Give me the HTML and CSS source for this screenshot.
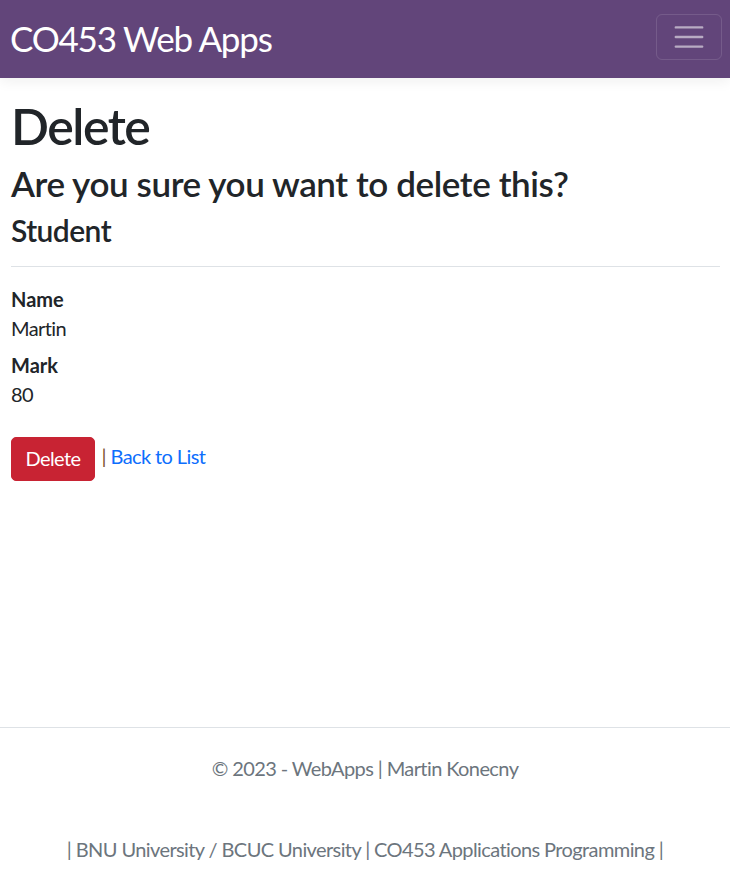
FILE: index.html
```html
<!DOCTYPE html>
<html lang="en">
<head>
<meta charset="utf-8">
<title>Delete - CO453 Web Apps</title>
<link rel="stylesheet" href="styles.css">
</head>
<body>
<header class="navbar">
  <a class="brand" href="#">CO453 Web Apps</a>
  <button class="toggler" type="button" aria-label="Toggle navigation">
    <svg class="toggler-icon" viewBox="0 0 30 30" width="36" height="36"><path d="M4 7h22M4 15h22M4 23h22" stroke="rgba(255,255,255,0.55)" stroke-width="2" stroke-linecap="round" fill="none"/></svg>
  </button>
</header>
<main class="container">
  <h1 class="title">Delete</h1>
  <h3 class="subtitle">Are you sure you want to delete this?</h3>
  <div class="details">
    <h4 class="entity">Student</h4>
    <hr class="rule">
    <dl class="fields">
      <dt class="label">Name</dt>
      <dd class="value">Martin</dd>
      <dt class="label">Mark</dt>
      <dd class="value">80</dd>
    </dl>
    <form class="actions">
      <input type="submit" value="Delete" class="btn-danger">
      <span class="after"><span class="sep">|</span> <a class="link" href="#">Back to List</a></span>
    </form>
  </div>
</main>
<footer class="footer">
  <div class="footer-line1">© 2023 - WebApps | Martin Konecny</div>
  <div class="footer-line2">| BNU University / BCUC University | CO453 Applications Programming |</div>
</footer>
</body>
</html>
```

FILE: styles.css
```css
* { box-sizing: border-box; }
html, body { margin: 0; padding: 0; }
body {
  font-family: Lato, "Open Sans", sans-serif;
  font-size: 20px;
  line-height: 1.5;
  letter-spacing: -0.6px;
  color: #212529;
  background: #fff;
  min-height: 100vh;
  display: flex;
  flex-direction: column;
}
.navbar {
  height: 78px;
  background: #62457a;
  display: flex;
  justify-content: space-between;
  align-items: flex-start;
  padding: 14px 8px 0 10px;
  box-shadow: 0 4px 12px rgba(0,0,0,0.06);
  position: relative;
  z-index: 1;
}
.brand {
  color: #fff;
  text-decoration: none;
  font-size: 35px;
  line-height: 47px;
  letter-spacing: -1.2px;
  margin-top: 1px;
}
.toggler {
  width: 66px;
  height: 46px;
  padding: 4px 14px;
  border: 1px solid rgba(255,255,255,0.12);
  border-radius: 6px;
  background: transparent;
  display: flex;
  align-items: center;
  justify-content: center;
}
.toggler-icon { display: block; }
.container {
  flex: 1;
  padding: 18px 10px 0 11px;
}
.title {
  font-size: 50px;
  line-height: 60px;
  font-weight: 600;
  letter-spacing: -1.5px;
  margin: 0 0 6px;
}
.subtitle {
  font-size: 35px;
  line-height: 42px;
  font-weight: 600;
  letter-spacing: -0.4px;
  margin: 0 0 8px;
}
.entity {
  font-size: 30px;
  line-height: 36px;
  font-weight: 600;
  letter-spacing: -0.55px;
  margin: 0;
}
.rule {
  border: 0;
  border-top: 1px solid #dee2e6;
  margin: 18px 0 18px;
  height: 0;
}
.fields { margin: 0; }
.label {
  font-weight: 700;
  line-height: 29px;
  letter-spacing: 0;
  margin: 0;
}
.value {
  line-height: 29px;
  margin: 0 0 8px;
}
.actions {
  margin-top: 28px;
  display: flex;
  align-items: flex-start;
}
.btn-danger {
  width: 84px;
  height: 44px;
  padding: 5px 0 7px;
  border: 1px solid #c82333;
  border-radius: 5px;
  background: #c82333;
  color: #fff;
  font-family: inherit;
  font-size: 20px;
  line-height: 30px;
  letter-spacing: -0.6px;
  text-align: center;
}
.after {
  padding-top: 4px;
  margin-left: 2px;
  line-height: 30px;
  white-space: pre;
}
.after::before { content: " "; }
.sep { color: #7b5030; }
.link { color: #0d6efd; text-decoration: none; }
.footer {
  border-top: 1px solid #dee2e6;
  color: #6c757d;
  text-align: center;
  white-space: nowrap;
  padding: 3px 0 15px;
}
.footer-line1 { line-height: 75px; }
.footer-line2 { line-height: 30px; margin-top: 28px; }
```
